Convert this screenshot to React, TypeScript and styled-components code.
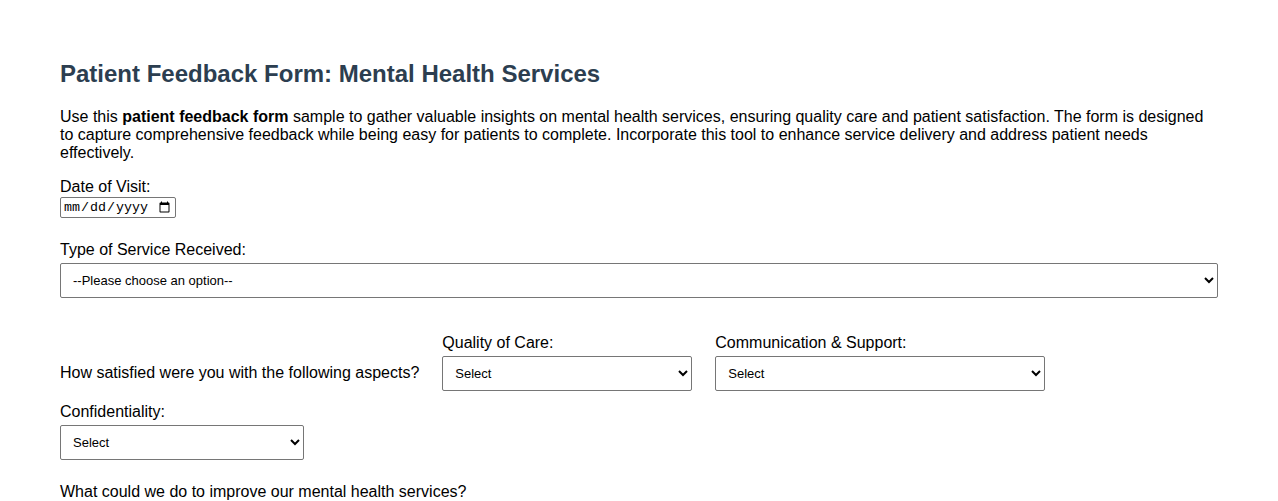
import React from "react";
import styled, { createGlobalStyle } from "styled-components";

const Global = createGlobalStyle`
  html, body { margin: 0; padding: 0; background: #ffffff; }
  body { font-family: "Liberation Sans", Arial, sans-serif; color: #000; }
`;

const Page = styled.div`
  padding: 60px 60px 0 60px;
  width: 1158px;
`;

const Title = styled.h1`
  margin: 0 0 20px 0;
  font-size: 24px;
  line-height: 28px;
  font-weight: bold;
  color: #2c3e50;
`;

const Intro = styled.p`
  margin: 0 0 16px 0;
  font-size: 16px;
  line-height: 18px;
`;

const Group = styled.div<{ $mb?: number }>`
  margin-bottom: ${(p) => p.$mb ?? 20}px;
`;

const Label = styled.label<{ $mb?: number }>`
  display: block;
  font-size: 16px;
  line-height: 18px;
  margin-bottom: ${(p) => p.$mb ?? 4}px;
`;

const DateInput = styled.input`
  font-family: "Liberation Mono", monospace;
  font-size: 13.33px;
  width: 116px;
  height: 21px;
  box-sizing: border-box;
  padding: 1px 2px;
  border: 1px solid #767676;
  border-radius: 2px;
  display: block;
`;

const Select = styled.select<{ $w?: number }>`
  display: block;
  width: ${(p) => (p.$w ? `${p.$w}px` : "100%")};
  height: 35px;
  box-sizing: border-box;
  padding: 0 8px;
  font-family: "Liberation Sans", Arial, sans-serif;
  font-size: 13px;
  color: #000;
  background: #fff;
  border: 1px solid #767676;
  border-radius: 2px;
`;

const Aspects = styled.div`
  display: flex;
  flex-wrap: wrap;
  align-items: flex-end;
  column-gap: 23px;
  row-gap: 12px;
  margin-bottom: 23px;
`;

const Question = styled.span`
  font-size: 16px;
  line-height: 18px;
  padding-bottom: 9px;
`;

const Field = styled.div<{ $full?: boolean }>`
  flex-basis: ${(p) => (p.$full ? "100%" : "auto")};
`;

const Prompt = styled.div`
  font-size: 16px;
  line-height: 18px;
`;

const ratingOptions = ["Very Satisfied", "Satisfied", "Neutral", "Dissatisfied", "Very Dissatisfied"];

export default function App() {
  return (
    <>
      <Global />
      <Page>
        <Title>Patient Feedback Form: Mental Health Services</Title>
        <Intro>
          Use this <b>patient feedback form</b> sample to gather valuable insights on mental health
          services, ensuring quality care and patient satisfaction. The form is designed to capture
          comprehensive feedback while being easy for patients to complete. Incorporate this tool to
          enhance service delivery and address patient needs effectively.
        </Intro>
        <Group $mb={23}>
          <Label htmlFor="visit" $mb={1}>Date of Visit:</Label>
          <DateInput id="visit" type="date" />
        </Group>
        <Group $mb={36}>
          <Label htmlFor="service">Type of Service Received:</Label>
          <Select id="service" defaultValue="">
            <option value="">--Please choose an option--</option>
            <option>Individual Therapy</option>
            <option>Group Therapy</option>
            <option>Psychiatric Consultation</option>
            <option>Crisis Intervention</option>
          </Select>
        </Group>
        <Aspects>
          <Question>How satisfied were you with the following aspects?</Question>
          <Field>
            <Label htmlFor="quality">Quality of Care:</Label>
            <Select id="quality" $w={250} defaultValue="">
              <option value="">Select</option>
              {ratingOptions.map((o) => (
                <option key={o}>{o}</option>
              ))}
            </Select>
          </Field>
          <Field>
            <Label htmlFor="comm">Communication &amp; Support:</Label>
            <Select id="comm" $w={330} defaultValue="">
              <option value="">Select</option>
              {ratingOptions.map((o) => (
                <option key={o}>{o}</option>
              ))}
            </Select>
          </Field>
          <Field $full>
            <Label htmlFor="conf">Confidentiality:</Label>
            <Select id="conf" $w={244} defaultValue="">
              <option value="">Select</option>
              {ratingOptions.map((o) => (
                <option key={o}>{o}</option>
              ))}
            </Select>
          </Field>
        </Aspects>
        <Prompt>What could we do to improve our mental health services?</Prompt>
      </Page>
    </>
  );
}
